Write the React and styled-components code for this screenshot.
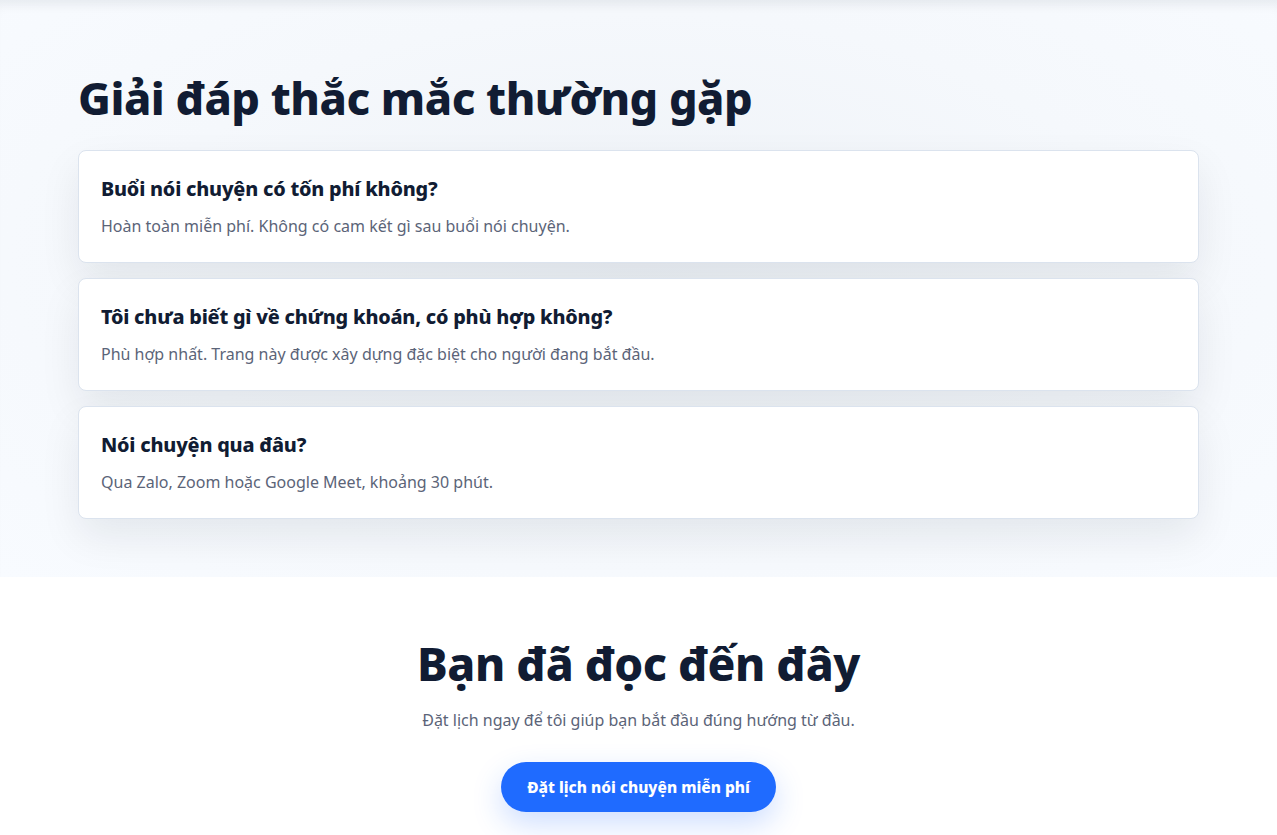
import React from 'react'
import styled, { createGlobalStyle } from 'styled-components'

const GlobalStyle = createGlobalStyle`
  * { box-sizing: border-box; }
  body {
    margin: 0;
    background: #ffffff;
    font-family: "Noto Sans", "Open Sans", sans-serif;
    color: #111c33;
  }
`

const FaqSection = styled.section`
  background: radial-gradient(ellipse at 50% 45%, #eef2f7 0%, #f5f8fc 55%, #f8fbff 100%);
  box-shadow: inset 0 12px 12px -8px rgba(15, 23, 42, 0.08);
  padding: 70px 0 58px;
`

const Container = styled.div`
  max-width: 1121px;
  margin: 0 auto;
`

const Heading = styled.h2`
  margin: 0 0 24px;
  font-size: 45px;
  line-height: 56px;
  font-weight: 800;
  letter-spacing: -0.5px;
  color: #111c33;
`

const List = styled.div`
  display: flex;
  flex-direction: column;
  gap: 15px;
`

const Card = styled.div`
  background: #ffffff;
  border: 1px solid #dbe3ee;
  border-radius: 8px;
  padding: 24px 22px 23px;
  box-shadow: 0 18px 40px rgba(15, 23, 42, 0.08);
`

const Question = styled.h3`
  margin: 0 0 10px;
  font-size: 19.8px;
  line-height: 28px;
  font-weight: 800;
  letter-spacing: -0.2px;
  color: #111c33;
`

const Answer = styled.p`
  margin: 0;
  font-size: 16px;
  line-height: 26px;
  color: #5b6478;
`

const CtaSection = styled.section`
  background: #ffffff;
  padding: 58px 0 23px;
  display: flex;
  flex-direction: column;
  align-items: center;
`

const CtaTitle = styled.h2`
  margin: 0 0 16px;
  font-size: 46px;
  line-height: 56px;
  font-weight: 800;
  letter-spacing: -0.5px;
  color: #111c33;
`

const CtaText = styled.p`
  margin: 0 0 29px;
  font-size: 16px;
  line-height: 26px;
  color: #5b6478;
`

const CtaButton = styled.button`
  height: 50px;
  padding: 0 26px;
  border: none;
  border-radius: 999px;
  background: #1f6bff;
  color: #ffffff;
  font-family: inherit;
  font-size: 15.5px;
  font-weight: 800;
  cursor: pointer;
  box-shadow: 0 12px 30px rgba(31, 107, 255, 0.22);
`

const faqs = [
  {
    q: 'Buổi nói chuyện có tốn phí không?',
    a: 'Hoàn toàn miễn phí. Không có cam kết gì sau buổi nói chuyện.',
  },
  {
    q: 'Tôi chưa biết gì về chứng khoán, có phù hợp không?',
    a: 'Phù hợp nhất. Trang này được xây dựng đặc biệt cho người đang bắt đầu.',
  },
  {
    q: 'Nói chuyện qua đâu?',
    a: 'Qua Zalo, Zoom hoặc Google Meet, khoảng 30 phút.',
  },
]

const App = () => {
  return (
    <>
      <GlobalStyle />
      <FaqSection>
        <Container>
          <Heading>Giải đáp thắc mắc thường gặp</Heading>
          <List>
            {faqs.map((item) => (
              <Card key={item.q}>
                <Question>{item.q}</Question>
                <Answer>{item.a}</Answer>
              </Card>
            ))}
          </List>
        </Container>
      </FaqSection>
      <CtaSection>
        <CtaTitle>Bạn đã đọc đến đây</CtaTitle>
        <CtaText>Đặt lịch ngay để tôi giúp bạn bắt đầu đúng hướng từ đầu.</CtaText>
        <CtaButton>Đặt lịch nói chuyện miễn phí</CtaButton>
      </CtaSection>
    </>
  )
}

export default App
